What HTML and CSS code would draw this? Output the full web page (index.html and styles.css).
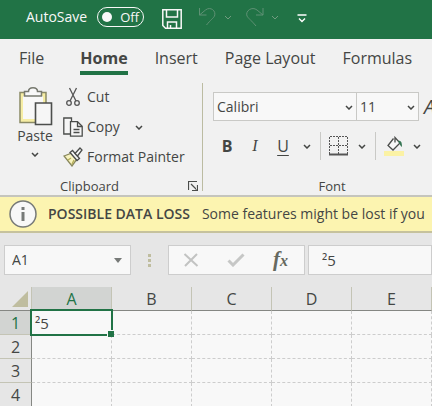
FILE: index.html
```html
<!DOCTYPE html>
<html lang="en">
<head>
<meta charset="utf-8">
<title>Workbook</title>
<link rel="stylesheet" href="styles.css">
</head>
<body>
<header class="titlebar">
  <span class="autosave" id="autosave-label">AutoSave</span>
  <button class="toggle" role="switch" aria-checked="false" aria-labelledby="autosave-label"><span class="knob"></span>Off</button>
  <button class="icon-btn save" aria-label="Save"><svg width="20" height="20" viewBox="0 0 20 20" fill="none" stroke="#f8f8f8" stroke-width="1.5"><path d="M.8.8h18.4v18.4H3.5L.8 16.500z"/><path d="M4.500 1v7h11V1M5.500 19v-6h9v6M8.500 19v-3"/></svg></button>
  <button class="icon-btn undo" aria-label="Undo"><svg width="20" height="20" viewBox="0 0 20 20" fill="none" stroke="#5f9174"><path d="M1.500 1v7h7M1.500 8l6-5c5-4 11 1 9 6-1 2-4 4-8 9"/></svg></button>
  <button class="icon-btn more" aria-label="Undo history"><svg width="8" height="5" viewBox="0 0 8 5" fill="none" stroke="#719b80"><path d="M1 1l3 3 3-3"/></svg></button>
  <button class="icon-btn redo" aria-label="Redo"><svg width="20" height="20" viewBox="0 0 20 20" fill="none" stroke="#5f9174"><path d="M18 1v7h-7M18 8l-6-5C7-1 0 4 2 9c1 2 4 4 9 10"/></svg></button>
  <button class="icon-btn more" aria-label="Redo history"><svg width="8" height="5" viewBox="0 0 8 5" fill="none" stroke="#719b80"><path d="M1 1l3 3 3-3"/></svg></button>
  <button class="icon-btn customize" aria-label="Customize toolbar"><svg width="10" height="9" viewBox="0 0 10 9" fill="none" stroke="#fff" stroke-width="1.400"><path d="M.5 1h9M2 4.500l3 3 3-3"/></svg></button>
</header>

<nav class="tabs">
  <a href="#file">File</a>
  <a href="#home" class="active">Home</a>
  <a href="#insert">Insert</a>
  <a href="#layout">Page Layout</a>
  <a href="#formulas">Formulas</a>
</nav>

<section class="ribbon">
  <div class="group clipboard">
    <div class="clip-body">
      <button class="paste">
        <svg width="36" height="40" viewBox="0 0 36 40" fill="none"><path d="M3 6.500h26v30H3z" fill="#f6eda4" stroke="#8b8a66" stroke-width="1.500"/><path d="M6 10h20v23H6z" fill="#f8f8f8"/><path d="M7.500 10V5.500h4c0-5 9-5 9 0h4V10z" fill="#f8f8f8" stroke="#77796f" stroke-width="1.500"/><path d="M18.500 17h16v21.500h-16z" fill="#f6f6f6" stroke="#4c4e4c" stroke-width="1.600"/></svg>
        <span>Paste</span>
        <svg class="chev" width="8" height="5" viewBox="0 0 8 5"><path d="M1 1l3 3 3-3"/></svg>
      </button>
      <div class="clip-list">
        <button><svg width="20" height="20" viewBox="0 0 20 20" fill="none" stroke="#555" stroke-width="1.300"><path d="M6.500 1l6.500 13M13.500 1L7 14"/><circle cx="6" cy="16" r="2.300"/><circle cx="14" cy="16" r="2.300"/></svg>Cut</button>
        <button><svg width="20" height="20" viewBox="0 0 20 20" fill="#f6f6f6" stroke="#4b4d4b" stroke-width="1.300"><path d="M7 17H.8V1h7.700v4"/><path d="M7.500 4.700h7l4.700 4.500v10H7.500z"/><path d="M14.500 5v4.500h4.500M10.500 12.500h6M10.500 15.500h6" fill="none"/></svg>Copy<svg class="chev copy-chev" width="8" height="5" viewBox="0 0 8 5"><path d="M1 1l3 3 3-3"/></svg></button>
        <button><svg width="20" height="20" viewBox="0 0 20 20" fill="#f8f8f8" stroke="#4b4d4b" stroke-width="1.300"><path d="M1 9l8-3 5 6-5 7z" fill="#f8f3c0" stroke="#88875c"/><path d="M5 13l3-2M9 17l2-4" stroke="#b4ad55"/><path d="M7 5.500l2.500-2 7 8-2.500 2z"/><path d="M12 6.500L17 1l2 2-4.500 6z"/></svg>Format Painter</button>
      </div>
    </div>
    <div class="group-label">Clipboard
      <button class="launcher" aria-label="Clipboard settings"><svg width="10" height="10" viewBox="0 0 10 10" fill="none" stroke="#4b4d4b"><path d="M.5 9V.5H9M3 3l5.500 5.500M9.500 4v5.500H4" stroke-width="1.200"/></svg></button>
    </div>
  </div>

  <div class="group font">
    <div class="font-row pickers">
      <label class="picker family"><select aria-label="Font"><option>Calibri</option></select><svg class="chev" width="8" height="5" viewBox="0 0 8 5"><path d="M1 1l3 3 3-3"/></svg></label>
      <label class="picker size"><select aria-label="Font size"><option>11</option></select><svg class="chev" width="8" height="5" viewBox="0 0 8 5"><path d="M1 1l3 3 3-3"/></svg></label>
      <button class="grow" aria-label="Increase font size">A</button>
    </div>
    <div class="font-row styles">
      <button class="letter bold">B</button>
      <button class="letter italic">I</button>
      <button class="letter under">U</button>
      <button class="drop" aria-label="Underline styles"><svg class="chev" width="8" height="5" viewBox="0 0 8 5"><path d="M1 1l3 3 3-3"/></svg></button>
      <span class="rule"></span>
      <button class="tool" aria-label="Borders"><svg width="20" height="20" viewBox="0 0 20 20" fill="none" stroke="#555"><path d="M.5 18V.5h18V18M9.500 1v17M1 9.500h18" stroke-dasharray="2 1"/><path d="M0 18.500h19" stroke-width="2"/></svg></button>
      <button class="drop" aria-label="Border styles"><svg class="chev" width="8" height="5" viewBox="0 0 8 5"><path d="M1 1l3 3 3-3"/></svg></button>
      <span class="rule"></span>
      <button class="tool" aria-label="Fill color"><svg width="20" height="20" viewBox="0 0 20 20" fill="none"><path d="M0 15h20v5H0z" fill="#fbf2a5"/><path d="M9.500 2.500L4 9.500l5 4.500 7-7-5-5.500v5" fill="#f8f8f8" stroke="#4b4d4b" stroke-width="1.300"/><path d="M14 5c3-1 4 1 4 6-2-1-2-3-4-6z" fill="#357553"/></svg></button>
      <button class="drop" aria-label="Fill colors"><svg class="chev" width="8" height="5" viewBox="0 0 8 5"><path d="M1 1l3 3 3-3"/></svg></button>
    </div>
    <div class="group-label">Font</div>
  </div>
</section>

<div class="message" role="status">
  <svg width="28" height="28" viewBox="0 0 28 28"><circle cx="14" cy="14" r="13" fill="#f8f8f8" stroke="#777a78" stroke-width="1.500"/><path d="M12.500 7h3v3h-3zM12.500 12h3v9h-3z" fill="#777a78"/></svg>
  <strong>POSSIBLE DATA LOSS</strong>
  <span>Some features might be lost if you</span>
</div>

<div class="formula-bar">
  <div class="name-box"><input aria-label="Name box" value="A1"><button aria-label="Named ranges"><svg width="8" height="5" viewBox="0 0 8 5"><path d="M0 0h8L4 5z" fill="#777a78"/></svg></button></div>
  <div class="dots"><i></i><i></i><i></i></div>
  <div class="entry-tools">
    <button aria-label="Cancel"><svg width="16" height="14" viewBox="0 0 16 14" fill="none" stroke="#c2c3c2" stroke-width="2"><path d="M1.500 1l13 12M14 1L2 13"/></svg></button>
    <button aria-label="Enter"><svg width="18" height="14" viewBox="0 0 18 14" fill="none" stroke="#c6c7c6" stroke-width="3"><path d="M1.500 7.500L6 12 16.500 1.500"/></svg></button>
    <button class="fx" aria-label="Insert function">f<span>x</span></button>
  </div>
  <input class="formula" aria-label="Formula" value="²5">
</div>

<main class="sheet">
  <table>
    <thead>
      <tr><th class="corner"><svg width="16" height="16" viewBox="0 0 16 16"><path d="M16 0v16H0z" fill="#bfbd9f"/></svg></th><th class="on">A</th><th>B</th><th>C</th><th>D</th><th>E</th></tr>
    </thead>
    <tbody>
      <tr><th class="on">1</th><td class="selected">²5<span class="selection"></span></td><td></td><td></td><td></td><td></td></tr>
      <tr><th>2</th><td></td><td></td><td></td><td></td><td></td></tr>
      <tr><th>3</th><td></td><td></td><td></td><td></td><td></td></tr>
      <tr><th>4</th><td></td><td></td><td></td><td></td><td></td></tr>
    </tbody>
  </table>
</main>
</body>
</html>
```
FILE: styles.css
```css
* { box-sizing: border-box; }

body {
  margin: 0;
  overflow: hidden;
  background: #f8f8f8;
  color: #444644;
  font: 14px/20px "Open Sans", "Noto Sans", sans-serif;
}

button, input, select {
  margin: 0;
  padding: 0;
  border: 0;
  background: none;
  color: inherit;
  font: inherit;
}

svg { display: block; flex: none; }
.chev { fill: none; stroke: #444644; stroke-width: 1.5; }

/* Title bar */
.titlebar {
  display: flex;
  align-items: center;
  height: 39px;
  padding: 0 0 6px 26px;
  background: #217346;
  color: #f8f8f8;
}
.toggle {
  display: flex;
  align-items: center;
  gap: 8px;
  width: 47px;
  height: 20px;
  margin-left: 10px;
  padding-left: 4px;
  border: 1px solid #f8f8f8;
  border-radius: 10px;
  font-size: 13px;
  line-height: 16px;
}
.knob { width: 10px; height: 10px; border-radius: 50%; background: #f8f8f8; }
.save { margin: 4px 0 0 18px; }
.undo { margin-left: 16px; }
.more { margin: 2px 0 0 6px; }
.redo { margin-left: 13px; }
.customize { margin: 3px 0 0 18px; }

/* Tabs */
.tabs {
  display: flex;
  gap: 27px;
  height: 38px;
  padding-left: 19px;
  background: #f1f1f1;
  font-size: 16px;
  line-height: 38px;
  white-space: nowrap;
}
.tabs a { color: inherit; text-decoration: none; }
.tabs a:first-child { margin-right: 9px; }
.tabs .active {
  height: 36px;
  border-bottom: 4px solid #217346;
  font-weight: 700;
}

/* Ribbon */
.ribbon {
  display: flex;
  height: 120px;
  border-bottom: 2px solid #c5c5bd;
  background: #f1f1f1;
  overflow: hidden;
}
.group { display: flex; flex-direction: column; flex: none; }
.group-label {
  position: relative;
  margin-top: auto;
  font-size: 13px;
  line-height: 18px;
  text-align: center;
}
.clipboard { position: relative; width: 203px; }
.clipboard::after {
  content: "";
  position: absolute;
  top: 6px;
  right: 0;
  bottom: 4px;
  border-right: 1px solid #bcbca2;
}
.clipboard .group-label { padding-right: 24px; }
.launcher { position: absolute; right: 5px; bottom: 4px; }
.clip-body { display: flex; gap: 9px; padding: 5px 0 0 16px; }
.paste {
  display: flex;
  flex-direction: column;
  align-items: center;
  width: 38px;
  padding-top: 4px;
}
.paste .chev { margin-top: 6px; }
.clip-list button {
  display: flex;
  align-items: center;
  gap: 4px;
  height: 30px;
  white-space: nowrap;
}
.clip-list .copy-chev { margin-left: 11px; }

.font { width: 258px; padding: 15px 0 0 10px; }
.font .group-label { padding-right: 10px; }
.font-row { display: flex; align-items: center; }
.picker {
  position: relative;
  height: 29px;
  border: 1px solid #c9c9c6;
  background: #f8f8f8;
}
.picker + .picker { border-left: 0; }
.picker select {
  width: 100%;
  height: 100%;
  padding-left: 3px;
  appearance: none;
}
.picker .chev { position: absolute; top: 12px; right: 3px; pointer-events: none; }
.family { width: 144px; }
.size { width: 62px; }
.grow { margin-left: 5px; font-size: 20px; font-style: italic; }
.styles { height: 28px; margin-top: 11px; }
.letter { width: 28px; font-size: 16px; }
.bold { font-weight: 700; }
.italic { font-family: "Liberation Serif", serif; font-style: italic; }
.under { text-decoration: underline; text-underline-offset: 3px; }
.drop { display: flex; justify-content: center; width: 20px; margin-right: 3px; }
.rule { width: 1px; height: 28px; background: #c9c9c6; }
.tool { margin: 0 3px 0 8px; }

/* Message bar */
.message {
  display: flex;
  align-items: center;
  height: 36px;
  padding-left: 9px;
  border-bottom: 2px solid #c6c29d;
  background: #fcf4b0;
  white-space: nowrap;
  overflow: hidden;
}
.message strong { margin: 0 12px 0 11px; font-weight: 600; }

/* Formula bar */
.formula-bar {
  display: flex;
  height: 54px;
  padding: 12px 0 12px 4px;
  background: #e6e6e6;
}
.name-box, .entry-tools, .formula { border: 1px solid #cdcdcd; background: #f8f8f8; }
.name-box { display: flex; align-items: center; width: 127px; padding: 0 8px 0 7px; }
.name-box input { flex: 1; min-width: 0; }
.dots {
  display: flex;
  flex-direction: column;
  align-items: center;
  justify-content: center;
  gap: 2px;
  width: 37px;
}
.dots i { width: 3px; height: 3px; background: #bfbd9f; }
.entry-tools {
  display: flex;
  align-items: center;
  justify-content: space-between;
  width: 137px;
  margin-right: 3px;
  padding: 0 16px 0 14px;
}
.fx { color: #666960; font: italic 700 21px/24px "Liberation Serif", serif; }
.fx span { font-size: 16px; }
.formula { flex: 1; min-width: 0; padding-left: 13px; font-size: 15px; }

/* Grid */
.sheet { overflow: hidden; }
table { width: 100%; table-layout: fixed; border-collapse: separate; border-spacing: 0; }
th, td { height: 24px; padding: 0; }
th { background: #e6e6e6; font-size: 16px; font-weight: 400; line-height: 22px; }
thead th { border-right: 1px solid #c4c4b5; border-bottom: 1px solid #858783; }
thead th:first-child { width: 32px; }
tbody th { border-right: 1px solid #858783; border-bottom: 1px solid #c4c4b5; }
td { border-right: 1px dashed #cdcdcd; border-bottom: 1px dashed #cdcdcd; font-size: 15px; line-height: 20px; }
th.on { background: #d2d4d2; color: #217346; }
.corner svg { margin: 0 0 0 12px; }
.selected { position: relative; padding-left: 3px; }
.selection {
  position: absolute;
  inset: -2px;
  border: 2px solid #217346;
}
.selection::after {
  content: "";
  position: absolute;
  right: -3px;
  bottom: -3px;
  width: 6px;
  height: 6px;
  border: solid #f8f8f8;
  border-width: 1px 0 0 1px;
  background: #217346;
}
```
